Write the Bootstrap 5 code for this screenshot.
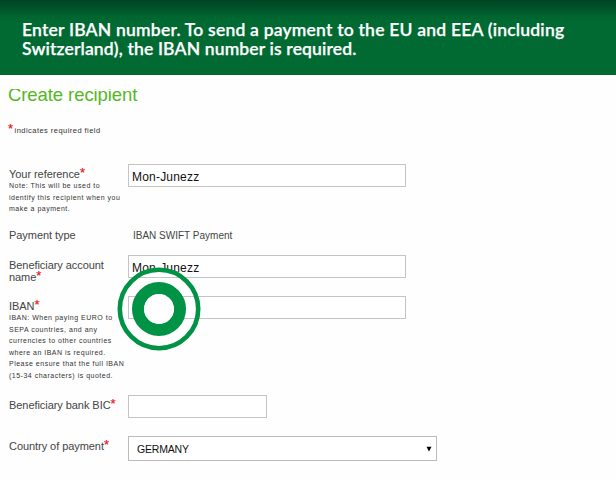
<!DOCTYPE html>
<html lang="en">
<head>
<meta charset="utf-8">
<meta name="viewport" content="width=device-width, initial-scale=1">
<title>Create recipient</title>
<link href="https://cdn.jsdelivr.net/npm/bootstrap@5.3.0/dist/css/bootstrap.min.css" rel="stylesheet">
<style>
body{font-family:"Liberation Sans",Arial,sans-serif;color:#444;background:#fefefe;overflow:hidden}
.banner{height:75px;padding:20px 22px 0;background:linear-gradient(#004523 0,#004c27 5px,#006630 17px,#006a32 24px);color:#fff;font:600 17.5px/19px Lato,sans-serif;-webkit-text-stroke:.25px #fff}
.banner span,.note span,.lbl span{display:block;white-space:nowrap}
.b1{letter-spacing:.21px}.b2{letter-spacing:.15px}
.title-clip{height:20px;margin:14px 0 -1px 8px;overflow:hidden}
.title-clip h1{font-size:18.5px;line-height:20px;margin:-4px 0 0;color:#55b71e;letter-spacing:-.08px;white-space:nowrap}
.req{height:56px;padding:16px 0 0 8px;font-size:7.5px;line-height:14px;letter-spacing:.46px;color:#333}
.star{color:#e8141c;font-size:13px;line-height:0;-webkit-text-stroke:.2px #e8141c}
.req .star{margin-right:1px}
.lcol{width:128px;padding-left:9px;flex:none}
.lbl{font-size:11px;line-height:12px;padding-top:4px;letter-spacing:-.06px}
.lbl .star{position:relative;top:-1px}
.note{font-size:7px;line-height:11.55px;color:#333;letter-spacing:.5px}
.field{border:1px solid #c4c4c4;border-radius:0;padding:2px 3px 0;height:23px;width:278px;font-size:12px;line-height:20px;letter-spacing:.2px;color:#111;background:#fff}
.r1{height:65px}.r2{height:25.5px}.r3{height:41.5px}.r4{height:99px}.r5{height:41px}
.plain{font-size:10px;line-height:12px;padding:1px 0 0 5px}
.bic{width:139px}
.country{width:309px;height:25px;padding:0 4px 0 8px;font-size:10.5px;letter-spacing:-.2px;border-color:#bbb}
.target{position:absolute;left:-11.5px;top:-29px;width:84px;height:84px}
</style>
</head>
<body>
<header class="banner"><span class="b1">Enter IBAN number. To send a payment to the EU and EEA (including</span><span class="b2">Switzerland), the IBAN number is required.</span></header>
<main>
<div class="title-clip"><h1 class="fw-normal">Create recipient</h1></div>
<div class="req"><span class="star">*</span>indicates required field</div>
<div class="d-flex r1">
  <div class="lcol"><div class="lbl">Your reference<b class="star fw-normal">*</b></div>
  <div class="note"><span>Note: This will be used to</span><span>identify this recipient when you</span><span>make a payment.</span></div></div>
  <div class="field">Mon-Junezz</div>
</div>
<div class="d-flex r2">
  <div class="lcol"><div class="lbl pt-0">Payment type</div></div>
  <div class="plain">IBAN SWIFT Payment</div>
</div>
<div class="d-flex r3">
  <div class="lcol"><div class="lbl">Beneficiary account<br>name<b class="star fw-normal">*</b></div></div>
  <div class="field">Mon-Junezz</div>
</div>
<div class="d-flex r4">
  <div class="lcol"><div class="lbl">IBAN<b class="star fw-normal">*</b></div>
  <div class="note"><span>IBAN: When paying EURO to</span><span>SEPA countries, and any</span><span>currencies to other countries</span><span>where an IBAN is required.</span><span>Please ensure that the full IBAN</span><span>(15-34 characters) is quoted.</span></div></div>
  <div class="position-relative">
    <div class="field"></div>
    <svg class="target" viewBox="0 0 84 84"><circle cx="42" cy="42" r="21" fill="none" stroke="#009245" stroke-width="12"/><circle cx="42" cy="42" r="14.8" fill="#fff"/><circle cx="42" cy="42" r="39.2" fill="none" stroke="#009245" stroke-width="4.6"/></svg>
  </div>
</div>
<div class="d-flex r5">
  <div class="lcol"><div class="lbl">Beneficiary bank BIC<b class="star fw-normal">*</b></div></div>
  <div class="field bic"></div>
</div>
<div class="d-flex">
  <div class="lcol"><div class="lbl">Country of payment<b class="star fw-normal">*</b></div></div>
  <div class="field country d-flex align-items-center justify-content-between"><span>GERMANY</span><svg width="6" height="6" viewBox="0 0 6 6"><path d="M.5 .7h5L3 5.5z" fill="#000"/></svg></div>
</div>
</main>
<script src="https://cdn.jsdelivr.net/npm/bootstrap@5.3.0/dist/js/bootstrap.bundle.min.js"></script>
</body>
</html>
